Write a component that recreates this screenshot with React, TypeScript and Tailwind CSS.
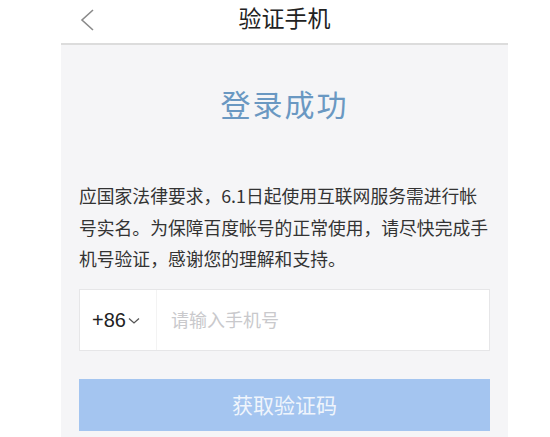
export default function App() {
  const font = { fontFamily: '"Noto Sans CJK SC", "Noto Sans", sans-serif' };
  return (
    <div className="w-[550px] h-[437px] bg-white overflow-hidden" style={font}>
      <div className="ml-[61px] w-[447px] h-full flex flex-col">
        <header className="relative h-[45px] border-b-2 border-[#dcdcdc] flex items-center justify-center">
          <svg
            className="absolute left-[17px] top-[8px]"
            width="18"
            height="24"
            viewBox="0 0 18 24"
            fill="none"
            stroke="#8a8a8a"
            strokeWidth="1.6"
          >
            <polyline points="15,2 4,12 15,22" />
          </svg>
          <h1 className="text-[23px] leading-none text-[#222] -mt-[8px]">验证手机</h1>
        </header>

        <main className="flex-1 bg-[#f5f5f7] px-[18px] flex flex-col">
          <h2 className="mt-[40px] text-center text-[30px] leading-[36px] tracking-[2px] text-[#6a98c2]">
            登录成功
          </h2>

          <p className="mt-[59px] text-[17.8px] leading-[31.5px] text-[#333]">
            应国家法律要求，6.1日起使用互联网服务需进行帐号实名。为保障百度帐号的正常使用，请尽快完成手机号验证，感谢您的理解和支持。
          </p>

          <div className="mt-[14px] h-[62px] bg-white border border-[#e6e6e8] flex items-center">
            <div className="h-full w-[77px] flex items-center pl-[12px] border-r border-[#f3f3f3]">
              <span className="text-[20px] text-[#222]" style={{ fontFamily: '"Liberation Sans", sans-serif' }}>
                +86
              </span>
              <svg className="ml-[2px] mt-[3px]" width="12" height="8" viewBox="0 0 12 8" fill="none" stroke="#555" strokeWidth="1.3">
                <polyline points="1,1.5 6,6 11,1.5" />
              </svg>
            </div>
            <span className="ml-[14px] text-[18px] text-[#c9c9cc]">请输入手机号</span>
          </div>

          <button className="mt-[28px] h-[52px] bg-[#a4c5f0] text-[21px] text-[#f0f5fc] flex items-center justify-center">
            获取验证码
          </button>
        </main>
      </div>
    </div>
  );
}
